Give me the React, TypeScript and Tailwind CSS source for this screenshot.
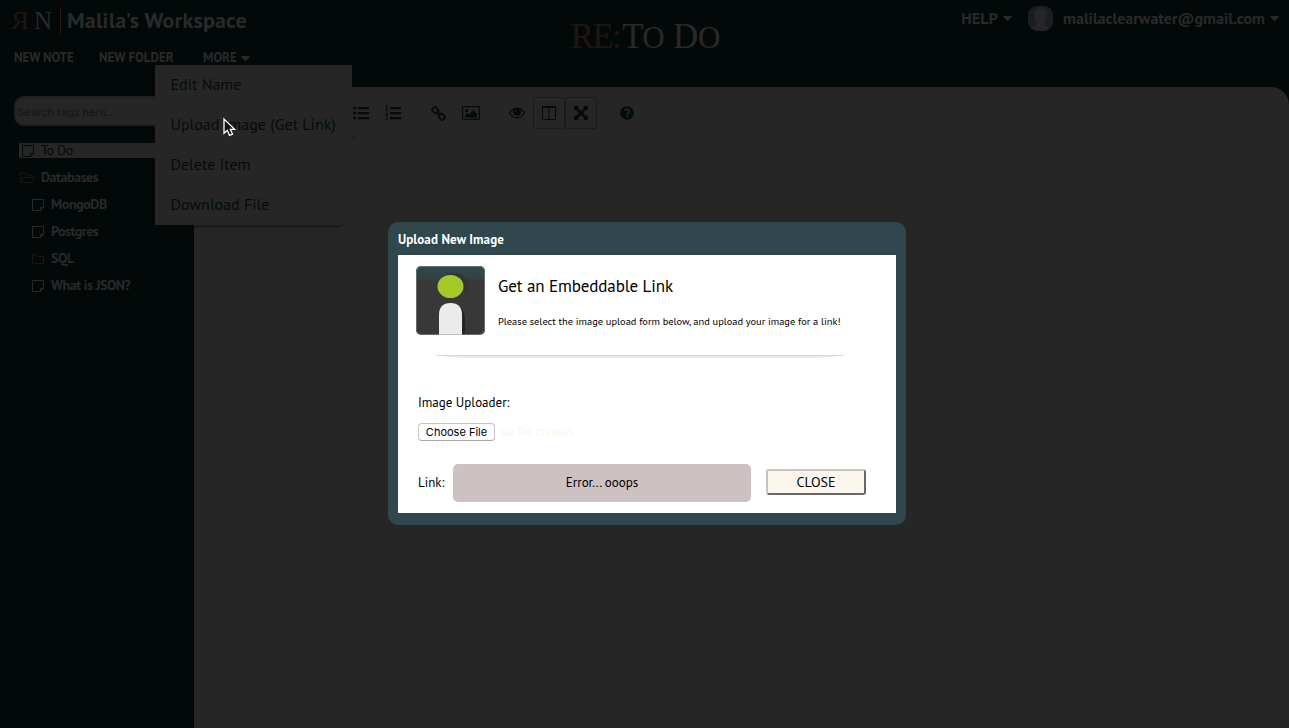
import React from "react";

const sans = "font-['PT_Sans','Noto_Sans',sans-serif] font-stretch-[87%]";

function NoteIcon() {
  return (
    <svg className="block h-[14px] w-[14px] shrink-0" viewBox="0 0 14 14" fill="none" stroke="currentColor">
      <path d="M1.5 1.5h11v8l-3 3h-8zM12.5 9.5h-3v3" />
    </svg>
  );
}

function FolderIcon({ open = false }: { open?: boolean }) {
  return open ? (
    <svg className="block h-[14px] w-[16px] shrink-0 text-[#21160d]" viewBox="0 0 16 14" fill="none" stroke="currentColor">
      <path d="M1.5 11.5v-9.5h4l1.5 2h5.5v2.5M1.5 11.5l3-5h11l-3 5z" />
    </svg>
  ) : (
    <svg className="block h-[14px] w-[14px] shrink-0 text-[#21160d]" viewBox="0 0 14 14" fill="none" stroke="currentColor">
      <path d="M1.5 11.5v-9h4l1.5 2h5.5v7z" />
    </svg>
  );
}

function Caret() {
  return (
    <svg className="block h-[5px] w-[9px] shrink-0" viewBox="0 0 9 5" fill="currentColor">
      <path d="M.7 0h7.6q1 .2.3 1.1L5.2 4.6q-.7.6-1.4 0L.4 1.1Q-.3.2.7 0z" />
    </svg>
  );
}

function TreeRow({ icon, label, className }: { icon: React.ReactNode; label: string; className: string }) {
  return (
    <li className={"flex h-[27px] items-center text-[14px] font-semibold " + className}>
      {icon}
      <span className="ml-[6px] whitespace-nowrap">{label}</span>
    </li>
  );
}

const tree = [
  { label: "Databases", icon: <FolderIcon open />, className: "pl-[19px] tracking-[-0.45px]" },
  { label: "MongoDB", icon: <NoteIcon />, className: "pl-[31px] tracking-[-0.4px]" },
  { label: "Postgres", icon: <NoteIcon />, className: "pl-[31px] tracking-[-0.5px]" },
  { label: "SQL", icon: <FolderIcon />, className: "pl-[31px] tracking-[-0.4px]" },
  { label: "What is JSON?", icon: <NoteIcon />, className: "pl-[31px] tracking-[-0.45px]" },
];

function Header() {
  return (
    <header className="grid h-[87px] grid-cols-[1fr_auto_1fr]">
      <div className="flex flex-col">
        <div className="flex h-[40px] items-center pl-[10px] whitespace-nowrap">
          <span className="inline-block w-[18px] -scale-x-110 font-['Liberation_Serif',serif] text-[25px] leading-none text-[#21160d]">R</span>
          <span className="ml-[6px] w-[19px] font-['Liberation_Serif',serif] text-[25px] leading-none">N</span>
          <span className="ml-[7px] h-[27px] w-px bg-[#2b1808]" />
          <span className="ml-[6px] text-[22px] font-semibold tracking-[0.2px]">Malila's Workspace</span>
        </div>
        <nav className="flex h-[36px] items-center pl-[14px] text-[13px] font-semibold whitespace-nowrap">
          <span className="w-[85px] tracking-[-0.1px]">NEW NOTE</span>
          <span className="w-[104px]">NEW FOLDER</span>
          <span className="flex items-center gap-[4px]">MORE <Caret /></span>
        </nav>
      </div>
      <h1 className="flex w-[152px] items-baseline pt-[17px] pl-[2px] font-['Liberation_Serif',serif] text-[35px] leading-[40px] whitespace-nowrap">
        <span className="w-[52px] tracking-[-1.6px] text-[#21160d]">RE:</span>
        <span className="w-[20px] tracking-[-2px]">T</span>
        <span className="w-[31px] text-[31px]">O</span>
        <span className="w-[25px]">D</span>
        <span className="text-[31px]">O</span>
      </h1>
      <div className="flex h-[36px] items-center justify-end pr-[10px] text-[16px] leading-[22px] font-semibold whitespace-nowrap">
        <span className="flex items-center gap-[5px] tracking-[0.2px]">HELP <Caret /></span>
        <svg className="mr-[10px] ml-[16px] block h-[25px] w-[25px]" viewBox="0 0 25 25">
          <rect width="25" height="25" rx="9" fill="#1b1e21" />
          <path d="M12.5 2.5c5 0 6.5 3 6.5 7 0 3-1.5 6-3 7.5v2q4 1 5.5 3.5Q18 25 12.5 25t-9-2.5Q5 20 9 19v-2c-2-1.5-3-4.5-3-7.5 0-4 1.5-7 6.5-7z" fill="#262626" />
        </svg>
        <span className="flex items-center gap-[5px]">malilaclearwater@gmail.com <Caret /></span>
      </div>
    </header>
  );
}

function Sidebar() {
  return (
    <aside className="w-[194px] shrink-0 pt-[9px]">
      <input
        placeholder="Search tags here..."
        className="ml-[14px] block h-[30px] w-[170px] rounded-[10px] border-2 border-[#202020] bg-[#262626] pt-[2px] pl-px font-['Inter','Liberation_Sans',sans-serif] text-[11px] font-medium placeholder:text-[#161717]"
      />
      <div className="mt-[17px] ml-[19px] flex h-[15px] w-[165px] items-center bg-[#262626] pl-[2px] text-[14px] tracking-[-0.4px] text-[#040a0b]">
        <NoteIcon />
        <span className="ml-[6px]">To Do</span>
      </div>
      <ul className="mt-[6px]">
        {tree.map((item) => (
          <TreeRow key={item.label} {...item} />
        ))}
      </ul>
    </aside>
  );
}

function Editor() {
  return (
    <main className="flex-1 rounded-tr-[18px] bg-[#262626] text-[#040b0d]">
      <div className="flex h-[52px] items-center pl-[159px]">
        <svg className="h-[14px] w-[17px]" viewBox="0 0 17 14" fill="currentColor">
          <path d="M5 1h11v2.2H5zM5 6h11v2.2H5zM5 11h11v2.2H5z" />
          <circle cx="1.6" cy="2" r="1.6" />
          <circle cx="1.6" cy="7" r="1.6" />
          <circle cx="1.6" cy="12" r="1.6" />
        </svg>
        <svg className="ml-[15px] h-[16px] w-[17px]" viewBox="0 0 17 16" fill="currentColor">
          <path d="M5 2h11v2.2H5zM5 7h11v2.2H5zM5 12h11v2.2H5z" />
          <path d="M.8.8l1-.4v4M.5 4.5h2.5M.5 6.2q2-.8 2 .6L.6 9.5h2.4M.5 11h2l-1 1.5q1.5.1 1.3 1.3-.5 1.2-2.3.7" fill="none" stroke="currentColor" strokeWidth=".9" />
        </svg>
        <svg className="ml-[29px] h-[15px] w-[15px]" viewBox="0 0 15 15" fill="none" stroke="currentColor" strokeWidth="1.8">
          <rect x="-3.1" y="-2.4" width="6.2" height="4.8" rx="1.8" transform="translate(4.2 4.2) rotate(45)" />
          <rect x="-3.1" y="-2.4" width="6.2" height="4.8" rx="1.8" transform="translate(10.8 10.8) rotate(45)" />
          <path d="M5.5 5.5l4 4" />
        </svg>
        <svg className="ml-[16px] h-[14px] w-[18px]" viewBox="0 0 18 14" fill="currentColor">
          <rect x=".6" y=".6" width="16.8" height="12.8" rx="1" fill="none" stroke="currentColor" strokeWidth="1.2" />
          <circle cx="4.7" cy="4.5" r="1.5" />
          <path d="M3 11.5V9.5l2.8-2.6 1.5 1.4L11.3 4 15 7.7v3.8z" />
        </svg>
        <svg className="ml-[29px] h-[12px] w-[16px]" viewBox="0 0 16 12" fill="none" stroke="currentColor" strokeWidth="1.2">
          <path d="M.7 6Q3.5 1.2 8 1.2T15.3 6Q12.5 10.8 8 10.8T.7 6z" />
          <circle cx="8" cy="5" r="3.3" fill="currentColor" />
          <path d="M6.2 4.8Q6.3 3.2 8 3.1" stroke="#262626" strokeWidth=".8" />
        </svg>
        <span className="ml-[8px] flex h-[32px] w-[32px] items-center justify-center rounded-[3px] border border-[#1a1a1a]">
          <svg className="h-[14px] w-[16px]" viewBox="0 0 16 14" fill="none" stroke="currentColor">
            <path d="M1.5.5h13v13h-13zM1 1.5h14M8 1v12" />
          </svg>
        </span>
        <span className="flex h-[32px] w-[32px] items-center justify-center rounded-[3px] border border-[#1a1a1a]">
          <svg className="h-[14px] w-[14px]" viewBox="0 0 14 14" fill="currentColor">
            <path d="M0 0h5L3.6 1.5 7 4.9l3.4-3.4L9 0h5v5l-1.5-1.4L9.1 7l3.4 3.4L14 9v5H9l1.4-1.5L7 9.1l-3.4 3.4L5 14H0V9l1.5 1.4L4.9 7 1.5 3.6 0 5z" />
          </svg>
        </span>
        <svg className="ml-[23px] h-[14px] w-[14px]" viewBox="0 0 14 14" fill="none">
          <circle cx="7" cy="7" r="6.8" fill="currentColor" />
          <path d="M4.7 5Q5.2 3.3 7 3.3T9.3 5.1C9.3 6.5 7.3 6.5 7.3 8.3" stroke="#262626" strokeWidth="1.7" />
          <path d="M6.3 9.5h1.9v1.8H6.3z" fill="#262626" />
        </svg>
      </div>
      <div className="-mt-[2px] ml-[158px] h-px w-[4px] bg-[#1a1a1a]" />
      <svg className="mt-[87px] block h-[4px] w-[152px]" viewBox="0 0 152 4">
        <path d="M0 0h152q-5 1.5-8 3H0z" fill="#1c1c1c" />
      </svg>
    </main>
  );
}

const menuItems = ["Edit Name", "Upload Image (Get Link)", "Delete Item", "Download File"];

function MoreMenu() {
  return (
    <ul className="absolute top-[65px] left-[155px] h-[160px] w-[197px] bg-[#262626] pl-[15px] text-[16px] leading-[22px] text-[#050b0d]">
      {menuItems.map((label) => (
        <li key={label} className="flex h-[40px] items-center pb-[2px] pl-[0.5px] whitespace-nowrap">{label}</li>
      ))}
    </ul>
  );
}

function Cursor() {
  return (
    <svg className="absolute top-[117px] left-[222px] h-[20px] w-[14px]" viewBox="0 0 14 20">
      <path d="M2 2v14.3l3.3-3 2.2 5 3-1.2-2.2-4.8h4.2z" fill="#111" stroke="#fff" strokeWidth="1.3" />
    </svg>
  );
}

function UploadDialog() {
  return (
    <div className="absolute inset-0 flex items-start justify-center pt-[222px] pl-[5px]">
      <section className="h-[303px] w-[518px] rounded-[10px] bg-[#30474d] px-[10px] text-black">
        <h2 className="h-[33px] text-[13px] leading-[35px] font-semibold tracking-[0.1px] text-white">Upload New Image</h2>
        <div className="h-[258px] bg-white pt-[11px] pl-[18px]">
          <div className="flex h-[69px]">
            <svg className="block h-[69px] w-[69px]" viewBox="0 0 69 69">
              <defs>
                <clipPath id="badge"><rect width="69" height="69" rx="5" /></clipPath>
                <linearGradient id="slate" x2="0" y2="1">
                  <stop offset="0" stopColor="#30474d" />
                  <stop offset=".13" stopColor="#30454a" />
                  <stop offset=".22" stopColor="#383838" />
                </linearGradient>
              </defs>
              <g clipPath="url(#badge)">
                <rect width="69" height="69" fill="url(#slate)" />
                <ellipse cx="38" cy="19" rx="14" ry="12" fill="#333535" />
                <path d="M27 69V50q0-12 10-12t12 14v17z" fill="#252525" />
                <ellipse cx="34.5" cy="20.5" rx="13" ry="11.5" fill="#a3c828" />
                <path d="M23 69V49q0-12 11.5-12T46 49v20z" fill="#ebebeb" />
              </g>
              <rect x=".5" y=".5" width="68" height="68" rx="5" fill="none" stroke="#8c9a9d" strokeOpacity=".5" />
            </svg>
            <div className="ml-[13px] whitespace-nowrap">
              <h3 className="pt-[8px] text-[17px] leading-[24px] tracking-[-0.1px]">Get an Embeddable Link</h3>
              <p className="mt-[15px] text-[10.4px] leading-[16px]">Please select the image upload form below, and upload your image for a link!</p>
            </div>
          </div>
          <svg className="mt-[20px] ml-[18px] block h-[4px] w-[412px]" viewBox="0 0 412 4">
            <path d="M0 0h412q-15 2.5-32 3H32Q15 2.5 0 0z" fill="#e9e9e9" />
            <path d="M2 .5h408" stroke="#d4d8d9" />
          </svg>
          <div className="ml-[2px]">
            <p className="mt-[34px] text-[13px] leading-[20px]">Image Uploader:</p>
            <div className="mt-[10px] flex h-[18px] items-center font-['Inter','Liberation_Sans',sans-serif] text-[11px] font-stretch-normal">
              <button className="h-[18px] w-[77px] rounded-[4px] border border-[#c4c4c4] border-b-[#a8a8a8] leading-none">Choose File</button>
              <span className="ml-[5px] tracking-[-0.15px] text-[#fbf5ea]">No file chosen</span>
            </div>
            <div className="mt-[23px] flex h-[38px] items-center text-[13px]">
              <span className="w-[35px]">Link:</span>
              <div className="flex h-[38px] w-[298px] items-center justify-center rounded-[5px] bg-[#cdc1c1]">Error... ooops</div>
              <button className="mb-[2px] ml-[15px] h-[26px] w-[100px] rounded-[3px] border-2 border-t-[#cdc1c1] border-r-[#686868] border-b-[#686868] border-l-[#cdc1c1] bg-[#fbf6eb] text-[14px] leading-none">CLOSE</button>
            </div>
          </div>
        </div>
      </section>
    </div>
  );
}

export default function App() {
  return (
    <div className={"relative flex h-[728px] w-[1289px] flex-col overflow-hidden bg-[#030909] text-[#292929] " + sans}>
      <Header />
      <div className="flex flex-1">
        <Sidebar />
        <Editor />
      </div>
      <MoreMenu />
      <Cursor />
      <UploadDialog />
    </div>
  );
}
